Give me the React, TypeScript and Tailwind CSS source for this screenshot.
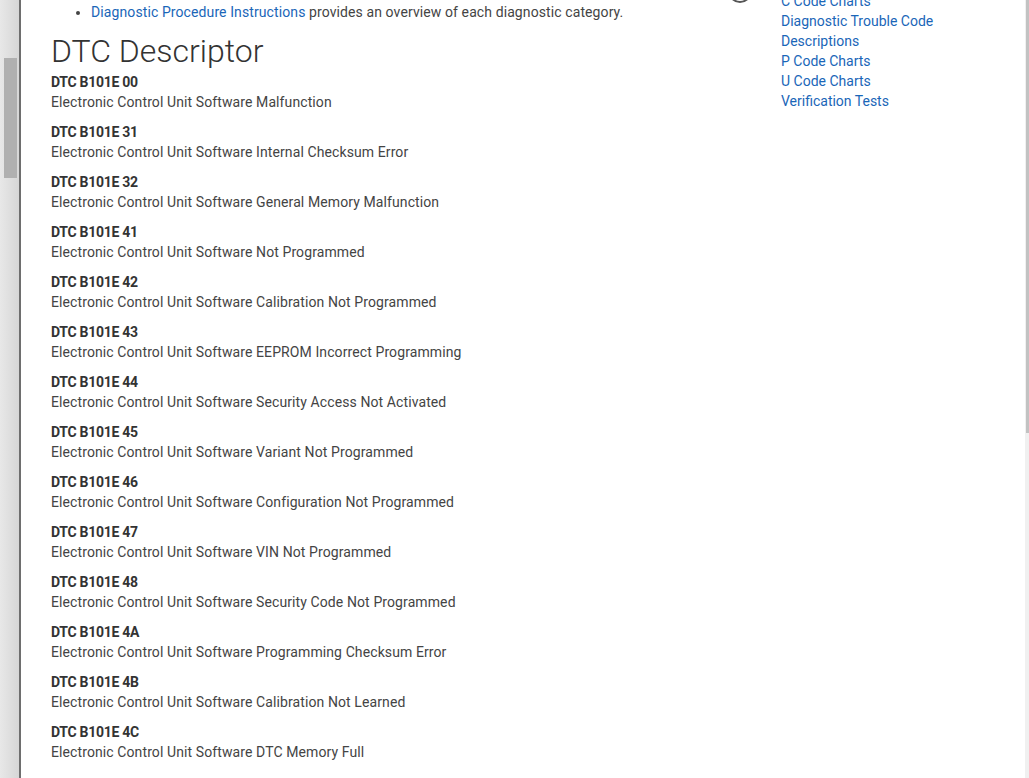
const codes: [string, string][] = [
  ['00', 'Electronic Control Unit Software Malfunction'],
  ['31', 'Electronic Control Unit Software Internal Checksum Error'],
  ['32', 'Electronic Control Unit Software General Memory Malfunction'],
  ['41', 'Electronic Control Unit Software Not Programmed'],
  ['42', 'Electronic Control Unit Software Calibration Not Programmed'],
  ['43', 'Electronic Control Unit Software EEPROM Incorrect Programming'],
  ['44', 'Electronic Control Unit Software Security Access Not Activated'],
  ['45', 'Electronic Control Unit Software Variant Not Programmed'],
  ['46', 'Electronic Control Unit Software Configuration Not Programmed'],
  ['47', 'Electronic Control Unit Software VIN Not Programmed'],
  ['48', 'Electronic Control Unit Software Security Code Not Programmed'],
  ['4A', 'Electronic Control Unit Software Programming Checksum Error'],
  ['4B', 'Electronic Control Unit Software Calibration Not Learned'],
  ['4C', 'Electronic Control Unit Software DTC Memory Full'],
];

const sideLinks = ['C Code Charts', 'Diagnostic Trouble Code Descriptions', 'P Code Charts', 'U Code Charts', 'Verification Tests'];

export default function App() {
  return (
    <div className="flex h-[778px] w-[1029px] overflow-hidden bg-white font-['Roboto',sans-serif] text-[14px] leading-[20px] text-[#444]">
      <div className="w-[19px] shrink-0 bg-gradient-to-r from-[#e8e8e8] to-[#d6d6d6] pl-[4px] pt-[58px]">
        <div className="h-[120px] w-[13px] bg-[#b0b0b0]" />
      </div>
      <div className="w-[2px] shrink-0 bg-[#6e6e6e]" />
      <div className="flex flex-1 pl-[30px]">
        <main className="w-[680px] shrink-0 tracking-[0.1px]">
          <ul className="mt-[2px] list-disc pl-[40px]">
            <li>
              <a className="text-[#1a66b8]">Diagnostic Procedure Instructions</a> provides an overview of each diagnostic category.
            </li>
          </ul>
          <h1 className="mt-[9px] mb-[1px] text-[32px] leading-[40px] font-light tracking-normal text-[#333]">DTC Descriptor</h1>
          <div className="flex flex-col gap-[10px]">
            {codes.map(([c, d]) => (
              <div key={c}>
                <div className="font-bold tracking-[-0.3px] text-[#333]">DTC B101E {c}</div>
                <div>{d}</div>
              </div>
            ))}
          </div>
        </main>
        <aside className="relative ml-[50px] mt-[-9px] w-[165px]">
          <svg className="absolute left-[-54px] top-[-13px]" width="26" height="26" viewBox="0 0 26 26">
            <circle cx="13" cy="13" r="11" fill="none" stroke="#555" strokeWidth="2" />
          </svg>
          {sideLinks.map((l) => (
            <div key={l} className="text-[#1a66b8]">{l}</div>
          ))}
        </aside>
        <div className="flex-1" />
        <div className="w-[4px] shrink-0 bg-[#f0f0f0] pl-[1px]">
          <div className="h-[433px] w-[3px] bg-[#c2c2c2]" />
        </div>
      </div>
    </div>
  );
}
